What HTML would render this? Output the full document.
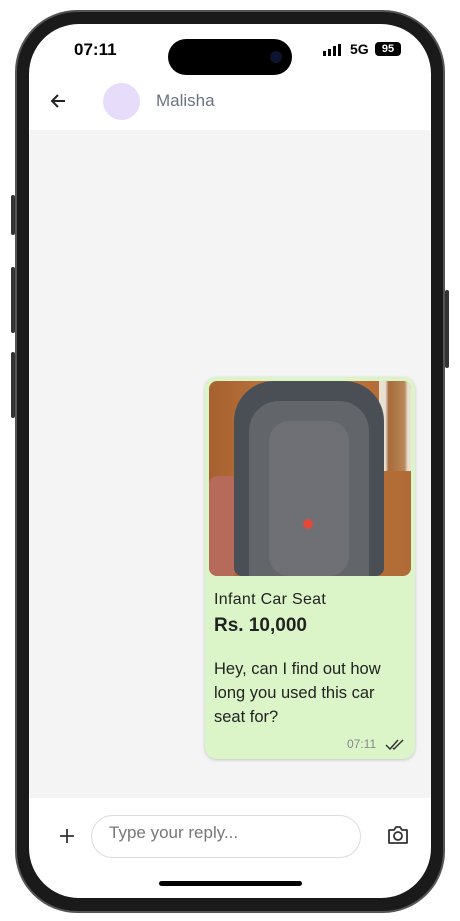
<!DOCTYPE html>
<html><head><meta charset="utf-8"><style>
*{margin:0;padding:0;box-sizing:border-box}
body{width:460px;height:921px;background:#fff;position:relative;overflow:hidden;font-family:"Liberation Sans",sans-serif}
.frame{position:absolute;left:15px;top:10px;width:430px;height:903px;border-radius:62px;background:#1a1a1a;border:2px solid #555}
.screen{position:absolute;left:29px;top:24px;width:402px;height:874px;border-radius:50px;background:#fff;overflow:hidden}
.btn{position:absolute;background:#333;width:4px;border-radius:2px}
.island{position:absolute;left:139px;top:15px;width:124px;height:36px;border-radius:18px;background:#000}
.grey{position:absolute;left:0;top:106px;width:402px;height:668px;background:#f4f4f4}
.bubble{position:absolute;left:176px;top:353px;width:210px;height:382px;background:#dbf5c9;border-radius:12px;box-shadow:0 1px 3px rgba(0,0,0,.2)}
.img{position:absolute;left:4px;top:4px;width:202px;height:195px;border-radius:8px;overflow:hidden;background:linear-gradient(90deg,#a5612f,#c07840 40%,#b06a35)}
</style></head><body>
<div class="btn" style="left:11px;top:195px;height:40px"></div>
<div class="btn" style="left:11px;top:267px;height:66px"></div>
<div class="btn" style="left:11px;top:352px;height:66px"></div>
<div class="btn" style="left:445px;top:290px;height:78px"></div>
<div class="frame"></div>
<div class="screen">
 <div style="position:absolute;left:45px;top:16px;font-size:17px;font-weight:bold;color:#000">07:11</div>
 <div class="island"><div style="position:absolute;left:102px;top:12px;width:12px;height:12px;border-radius:50%;background:#0d1430"></div></div>
 <div style="position:absolute;left:294px;top:20px;display:flex;align-items:flex-end;gap:2px">
  <div style="width:3px;height:5px;background:#000"></div><div style="width:3px;height:7px;background:#000"></div><div style="width:3px;height:10px;background:#000"></div><div style="width:3px;height:12px;background:#000"></div>
 </div>
 <div style="position:absolute;left:321px;top:17px;font-size:14px;font-weight:bold">5G</div>
 <div style="position:absolute;left:346px;top:18px;width:26px;height:14px;border-radius:4px;background:#000;color:#fff;font-size:11px;font-weight:bold;text-align:center;line-height:14px">95</div>
 <svg style="position:absolute;left:20px;top:68px" width="18" height="18" viewBox="0 0 18 18"><path d="M16 9H3M9 3L3 9l6 6" stroke="#222" stroke-width="2" fill="none"/></svg>
 <div style="position:absolute;left:74px;top:59px;width:37px;height:37px;border-radius:50%;background:#e8dcfb"></div>
 <div style="position:absolute;left:127px;top:67px;font-size:17px;color:#6b7280">Malisha</div>
 <div class="grey"></div>
 <div class="bubble">
  <div class="img">
   <div style="position:absolute;left:0;top:95px;width:30px;height:100px;background:#b56a5a;border-radius:8px"></div>
   <div style="position:absolute;left:170px;top:0;width:32px;height:90px;background:linear-gradient(90deg,#e8e0d0 20%,#a86a3a 30%,#b8885a 80%,#e8e0d0 90%)"></div>
   <div style="position:absolute;left:25px;top:0;width:150px;height:195px;border-radius:40px 40px 8px 8px;background:#4a4e55"></div>
   <div style="position:absolute;left:40px;top:20px;width:120px;height:175px;border-radius:30px 30px 0 0;background:#62656a"></div>
   <div style="position:absolute;left:60px;top:40px;width:80px;height:155px;border-radius:20px;background:#6e7075"></div>
   <div style="position:absolute;left:94px;top:138px;width:10px;height:10px;border-radius:50%;background:#e04a3a"></div>
  </div>
  <div style="position:absolute;left:9px;top:214px;font-size:16px;color:#222;letter-spacing:.3px">Infant Car Seat</div>
  <div style="position:absolute;left:9px;top:238px;font-size:19px;font-weight:bold;color:#222">Rs. 10,000</div>
  <div style="position:absolute;left:9px;top:280px;width:196px;font-size:16.5px;line-height:24px;color:#222">Hey, can I find out how long you used this car seat for?</div>
  <div style="position:absolute;left:142px;top:360px;font-size:12px;color:#888">07:11</div>
  <svg style="position:absolute;left:180px;top:362px" width="20" height="12" viewBox="0 0 20 12"><path d="M1 6l4 4 8-9M8 9l1 1 9-9" stroke="#333" stroke-width="1.5" fill="none"/></svg>
 </div>
 <svg style="position:absolute;left:29px;top:803px" width="18" height="18" viewBox="0 0 18 18"><path d="M9 2v14M2 9h14" stroke="#333" stroke-width="1.8"/></svg>
 <div style="position:absolute;left:62px;top:791px;width:270px;height:43px;border:1px solid #ddd;border-radius:22px"></div>
 <div style="position:absolute;left:80px;top:799px;font-size:17px;color:#777">Type your reply...</div>
 <svg style="position:absolute;left:358px;top:801px" width="22" height="20" viewBox="0 0 22 20"><path d="M2 5h5l2-3h4l2 3h5v13H2z" stroke="#333" stroke-width="1.8" fill="none" stroke-linejoin="round"/><circle cx="11" cy="11" r="4" stroke="#333" stroke-width="1.8" fill="none"/></svg>
 <div style="position:absolute;left:130px;top:857px;width:143px;height:5px;border-radius:3px;background:#000"></div>
</div>
</body></html>
